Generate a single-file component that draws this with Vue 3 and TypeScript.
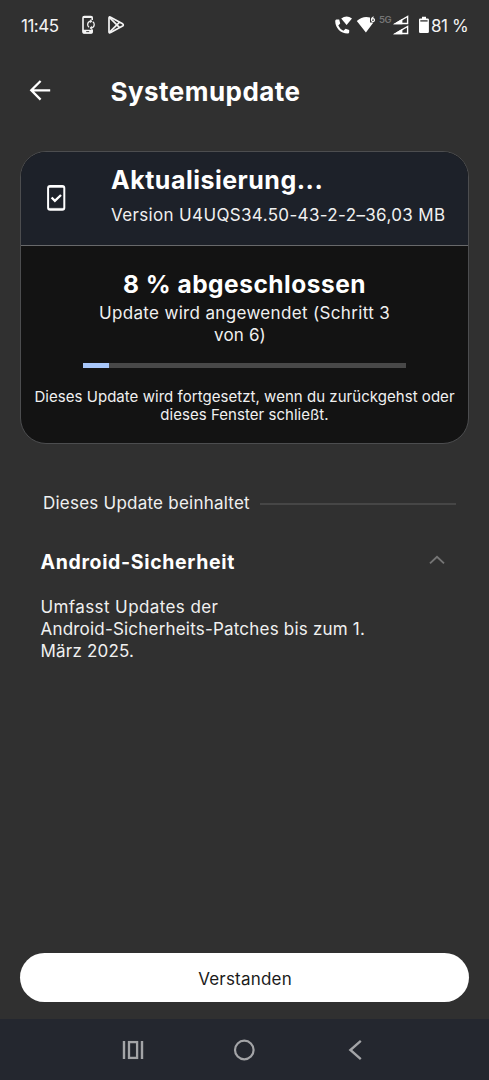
<script setup lang="ts">
const versionLabel = 'Version U4UQS34.50-43-2-2–36,03 MB'
const percent = 8
const description = ['Umfasst Updates der', 'Android-Sicherheits-Patches bis zum 1.', 'März 2025.']
</script>

<template>
  <div class="screen">
    <header class="status">
      <span class="clock">11:45</span>
      <svg class="ico-sync" width="16" height="20" viewBox="0 0 16 20">
        <path d="M11.2 5V2.8Q11.2 1.5 9.9 1.5H3.3Q2 1.5 2 2.8V16.6Q2 18 3.3 18H9.9Q11.2 18 11.2 16.6V14.6" fill="none" stroke="#f4f4f4" stroke-width="1.6" />
        <path d="M2 1.2H11.2V3H2zM1.6 14.8H11.6V17.6Q11.6 18.6 10.6 18.6H2.6Q1.6 18.6 1.6 17.6z" fill="#f4f4f4" />
        <path d="M5.2 16.6H8.2" stroke="#303030" stroke-width="0.9" />
        <path d="M8 12.2A3.5 3.5 0 0 1 8.6 6.3L10 6.2M11.8 6.8A3.5 3.5 0 0 1 11.4 12.7L10 12.9" fill="none" stroke="#f4f4f4" stroke-width="1.3" />
        <path d="M9.2 4.2L11.4 6.2L9.2 8.2zM10.8 10.8L8.6 12.9L10.8 15z" fill="#f4f4f4" />
      </svg>
      <svg class="ico-play" width="18" height="20" viewBox="0 0 18 20">
        <g fill="none" stroke="#f4f4f4" stroke-width="1.7" stroke-linejoin="round">
          <path d="M2 3.2Q2 1.4 3.6 2.2L15.6 8.8Q17 9.9 15.6 11L3.6 17.6Q2 18.4 2 16.7z" />
          <path d="M2.4 2.4L12.6 12.6M2.4 17.4L12.6 7.2" />
        </g>
      </svg>
      <span class="spacer"></span>
      <svg class="ico-call" width="20" height="20" viewBox="0 0 20 20">
        <path d="M2.4 4.6Q1.2 4.7 1.2 6.2C1.4 13 6.6 18.3 13.6 18.6Q15.2 18.6 15.2 17.2V14.9L11.6 13.7L9.4 15.8Q5.8 14.1 4.3 10.6L6.2 8.6L5.2 4.6z" fill="#fff" />
        <path d="M7.2 3.5Q12.6 -.5 18 3.5L12.6 10z" fill="#fff" />
      </svg>
      <svg class="ico-wifi" width="21" height="20" viewBox="0 0 21 20">
        <path d="M.8 6Q7 .6 14 2.6V7.6H17.4L9.9 17.6z" fill="#fff" />
        <path d="M17.6 1.7Q15.4 2.5 15.4 5" fill="none" stroke="#fff" stroke-width="1.2" />
        <circle cx="17" cy="5.1" r="1.5" fill="none" stroke="#fff" stroke-width="1.2" />
      </svg>
      <span class="net">5G</span>
      <svg class="ico-signal" width="17" height="20" viewBox="0 0 17 20">
        <g v-for="y in [0, 10]" :key="y" :transform="`translate(0 ${y})`">
          <path d="M2.6 8.5L14.6 1.5V8.5z" fill="none" stroke="#fff" stroke-width="1.4" />
          <path d="M.2 9.2L9.4 3.8V9.2z" fill="#fff" />
        </g>
      </svg>
      <svg class="ico-battery" width="12" height="18" viewBox="0 0 12 18">
        <path d="M4 .8H8V2.4H9.6Q10.9 2.4 10.9 3.6V15.8Q10.9 17 9.6 17H2.3Q1 17 1 15.8V3.6Q1 2.4 2.3 2.4H4z" fill="#fff" />
        <path d="M2.3 4.9H9.6" stroke="#303030" stroke-width="1.3" />
      </svg>
      <span class="charge">81 %</span>
    </header>

    <div class="appbar">
      <svg width="24" height="24" viewBox="0 0 24 24">
        <path d="M22.2 12.3H3.2M12.6 3L3.3 12.3L12.6 21.6" fill="none" stroke="#fff" stroke-width="2.3" />
      </svg>
      <h1>Systemupdate</h1>
    </div>

    <section class="card">
      <div class="card-head">
        <svg width="20" height="28" viewBox="0 0 20 28">
          <rect x="2.1" y="2.1" width="16.2" height="23.6" rx="2" fill="none" stroke="#fff" stroke-width="2" />
          <path d="M2 3.4H18.4M2 24.4H18.4" stroke="#fff" stroke-width="0.8" />
          <path d="M5.6 13.5L8.9 16.9L15 11" fill="none" stroke="#fff" stroke-width="2.3" />
        </svg>
        <div class="card-title">
          <h2>Aktualisierung...</h2>
          <p>{{ versionLabel }}</p>
        </div>
      </div>
      <div class="card-body">
        <h3>{{ percent }} % abgeschlossen</h3>
        <p class="step"><span class="step-a">Update wird angewendet (Schritt 3</span><br /><span class="step-b">von 6)</span></p>
        <div class="track"><div class="fill" :style="{ width: percent + '%' }"></div></div>
        <p class="note">Dieses Update wird fortgesetzt, wenn du zurückgehst oder<br />dieses Fenster schließt.</p>
      </div>
    </section>

    <section class="details">
      <div class="divider"><span>Dieses Update beinhaltet</span><i></i></div>
      <div class="item">
        <h4>Android-Sicherheit</h4>
        <svg width="18" height="12" viewBox="0 0 18 12">
          <path d="M2 9.4L9 2.9L16 9.4" fill="none" stroke="#757575" stroke-width="1.9" />
        </svg>
      </div>
      <p class="desc"><span v-for="line in description" :key="line">{{ line }}</span></p>
    </section>

    <button class="ok" type="button">Verstanden</button>

    <nav class="nav">
      <svg width="24" height="24" viewBox="0 0 24 24">
        <path d="M3 3V21M21 3V21" stroke="#a3a4a7" stroke-width="2.4" />
        <rect x="8" y="4.1" width="8.1" height="15.8" fill="none" stroke="#a3a4a7" stroke-width="2.3" />
      </svg>
      <svg width="24" height="24" viewBox="0 0 24 24">
        <circle cx="12.3" cy="12" r="9.3" fill="none" stroke="#a3a4a7" stroke-width="2.2" />
      </svg>
      <svg width="24" height="24" viewBox="0 0 24 24">
        <path d="M17.8 2.9L7.4 12L17.8 21.1" fill="none" stroke="#a3a4a7" stroke-width="2.4" />
      </svg>
    </nav>
  </div>
</template>

<style>
body { margin: 0; background: #303030; }
</style>

<style scoped>
.screen {
  width: 489px;
  height: 1080px;
  display: flex;
  flex-direction: column;
  background: #303030;
  color: #fff;
  font-family: Inter, "Open Sans", sans-serif;
  overflow: hidden;
}
h1, h2, h3, h4, p { margin: 0; white-space: nowrap; }
svg { display: block; flex: none; }

.status {
  height: 50px;
  display: flex;
  align-items: center;
  box-sizing: border-box;
  padding-left: 21px;
}
.clock { width: 60px; font-size: 17px; letter-spacing: -0.5px; line-height: 20px; color: #f4f4f4; padding-top: 1px; box-sizing: border-box; }
.ico-play { margin-left: 10px; }
.spacer { flex: 1; }
.ico-call { margin-right: 2px; }
.net { width: 13px; margin-left: 2px; font-size: 9.5px; font-weight: 600; color: #757575; line-height: 12px; margin-bottom: 11px; letter-spacing: -0.4px; white-space: nowrap; }
.ico-signal { margin-left: 1px; }
.ico-battery { margin-left: 8px; }
.charge { width: 58px; margin-left: 1px; font-size: 17px; letter-spacing: -0.4px; line-height: 20px; color: #f4f4f4; padding-top: 1px; }

.appbar { height: 82px; display: flex; align-items: center; padding-left: 28px; margin-bottom: 19px; }
.appbar svg { margin-top: -2px; }
.appbar h1 { margin-left: 58.5px; font-size: 26px; line-height: 32px; font-weight: 700; letter-spacing: 0.45px; padding-top: 2px; }

.card {
  flex: none;
  width: 449px;
  height: 293px;
  margin-left: 20px;
  box-sizing: border-box;
  border: 1px solid #4c4d4f;
  border-radius: 26px;
  background: #131313;
  overflow: hidden;
}
.card-head { height: 94px; box-sizing: border-box; border-bottom: 1px solid #68696b; background: #1d2129; display: flex; padding-left: 24.5px; }
.card-head svg { margin-top: 32px; }
.card-title { margin-left: 45.5px; padding-top: 11px; }
.card-title h2 { font-size: 25px; line-height: 34px; font-weight: 700; letter-spacing: 0.5px; }
.card-title p { font-size: 17px; line-height: 24px; margin-top: 6px; letter-spacing: 0.35px; color: #f0f0f0; }
.card-body { display: flex; flex-direction: column; align-items: center; text-align: center; padding-top: 21px; }
.card-body h3 { font-size: 24.5px; line-height: 34px; font-weight: 700; letter-spacing: 0.5px; }
.step { margin-top: 2px; font-size: 17px; line-height: 21.7px; color: #f0f0f0; }
.step-a { letter-spacing: 0.34px; }
.step-b { margin-right: 9px; letter-spacing: 0.14px; }
.track { width: 322.5px; height: 5px; margin-top: 17px; background: #484848; }
.fill { height: 100%; background: #a8c7fa; }
.note { margin-top: 20px; font-size: 15px; line-height: 18px; letter-spacing: 0.04px; color: #f0f0f0; }

.details { padding: 47px 33px 0 41px; flex: 1; }
.divider { display: flex; align-items: center; height: 24px; font-size: 17px; letter-spacing: 0.23px; color: #f0f0f0; padding-left: 2px; white-space: nowrap; }
.divider i { flex: 1; height: 2px; background: #464646; margin: 2px 0 0 10px; }
.item { display: flex; align-items: center; justify-content: space-between; height: 28px; margin-top: 33px; padding-right: 10px; }
.item h4 { font-size: 19.5px; line-height: 28px; font-weight: 700; letter-spacing: 0.65px; margin-left: -0.5px; }
.item svg { margin-top: -4px; }
.desc { margin-top: 21.4px; font-size: 17px; line-height: 21.7px; color: #f0f0f0; margin-left: -0.5px; }
.desc span { display: block; letter-spacing: 0.2px; }
.desc span:first-child { letter-spacing: 0.4px; }

.ok {
  flex: none;
  width: 449px;
  height: 49px;
  margin: 0 0 17px 20px;
  padding: 2px 0 0 1px;
  border: 0;
  border-radius: 25px;
  background: #fff;
  color: #1b1b1b;
  font: 400 17px/24px Inter, "Open Sans", sans-serif;
  letter-spacing: 0.2px;
}

.nav { flex: none; height: 61px; box-sizing: border-box; background: #24272f; display: flex; align-items: center; justify-content: space-between; padding: 0 122px 0 121px; }
</style>
